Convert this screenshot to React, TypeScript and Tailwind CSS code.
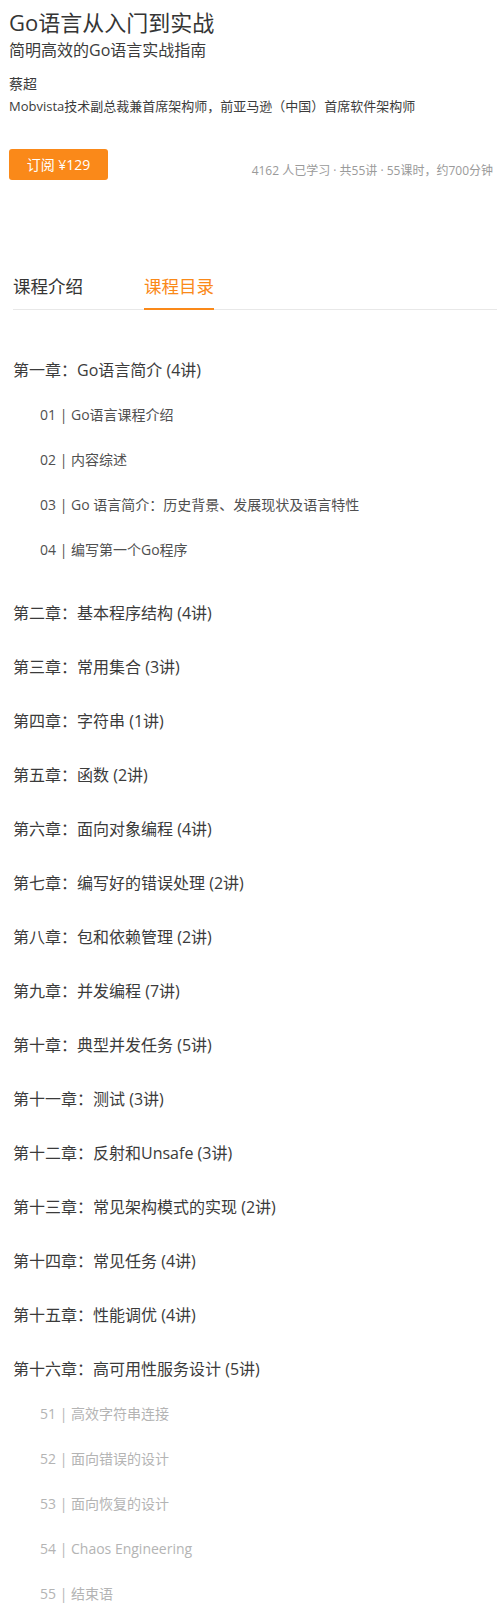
const chapters: { title: string; lessons?: string[]; muted?: boolean }[] = [
  {
    title: '第一章：Go语言简介 (4讲)',
    lessons: ['01 | Go语言课程介绍', '02 | 内容综述', '03 | Go 语言简介：历史背景、发展现状及语言特性', '04 | 编写第一个Go程序'],
  },
  { title: '第二章：基本程序结构 (4讲)' },
  { title: '第三章：常用集合 (3讲)' },
  { title: '第四章：字符串 (1讲)' },
  { title: '第五章：函数 (2讲)' },
  { title: '第六章：面向对象编程 (4讲)' },
  { title: '第七章：编写好的错误处理 (2讲)' },
  { title: '第八章：包和依赖管理 (2讲)' },
  { title: '第九章：并发编程 (7讲)' },
  { title: '第十章：典型并发任务 (5讲)' },
  { title: '第十一章：测试 (3讲)' },
  { title: '第十二章：反射和Unsafe (3讲)' },
  { title: '第十三章：常见架构模式的实现 (2讲)' },
  { title: '第十四章：常见任务 (4讲)' },
  { title: '第十五章：性能调优 (4讲)' },
  {
    title: '第十六章：高可用性服务设计 (5讲)',
    lessons: ['51 | 高效字符串连接', '52 | 面向错误的设计', '53 | 面向恢复的设计', '54 | Chaos Engineering', '55 | 结束语'],
    muted: true,
  },
]

function Chapter({ title, lessons, muted, last }: { title: string; lessons?: string[]; muted?: boolean; last?: boolean }) {
  if (!lessons) {
    return <div className="flex h-[54px] items-center text-[16px] text-[#3b3b3b]">{title}</div>
  }
  return (
    <div className={last ? 'pt-[5px]' : 'pt-[5px] pb-[14px]'}>
      <div className="flex h-[44px] items-center text-[16px] text-[#3b3b3b]">{title}</div>
      {lessons.map((l) => (
        <div
          key={l}
          className={`flex h-[45px] items-center pl-[27px] text-[14px] ${muted ? 'text-[#b4b4b4]' : 'text-[#505050]'}`}
        >
          {l}
        </div>
      ))}
    </div>
  )
}

export default function App() {
  return (
    <div className="bg-white font-['Open_Sans','Noto_Sans_CJK_SC',sans-serif]">
      <header className="pt-[7px] pl-[9px] pr-[5px]">
        <h1 className="text-[22px] leading-[30px] text-[#353535]">Go语言从入门到实战</h1>
        <p className="text-[16px] leading-[26px] text-[#3b3b3b]">简明高效的Go语言实战指南</p>
        <div className="mt-[11px] text-[14px] leading-[20px] text-[#3b3b3b]">蔡超</div>
        <p className="mt-[2px] text-[13px] leading-[20px] text-[#3b3b3b]">
          Mobvista技术副总裁兼首席架构师，前亚马逊（中国）首席软件架构师
        </p>
        <div className="mt-[33px] flex items-end justify-between">
          <button className="flex h-[31px] w-[99px] items-center justify-center rounded-[3px] bg-[#fa8919] text-[14px] text-white">
            订阅 ¥129
          </button>
          <span className="text-[12px] leading-[18px] text-[#9a9a9a]">4162 人已学习 · 共55讲 · 55课时，约700分钟</span>
        </div>
      </header>

      <nav className="mt-[94px] ml-[13px] mr-px flex border-b border-[#e8e8e8]">
        <div className="-mb-px border-b-2 border-transparent pb-[10px] text-[17.5px] leading-[24px] text-[#353535]">
          课程介绍
        </div>
        <div className="-mb-px ml-[61px] border-b-2 border-[#fa8919] pb-[10px] text-[17.5px] leading-[24px] text-[#fa8919]">
          课程目录
        </div>
      </nav>

      <main className="mt-[33px] pl-[13px]">
        {chapters.map((c, i) => (
          <Chapter key={c.title} {...c} last={i === chapters.length - 1} />
        ))}
      </main>
    </div>
  )
}
